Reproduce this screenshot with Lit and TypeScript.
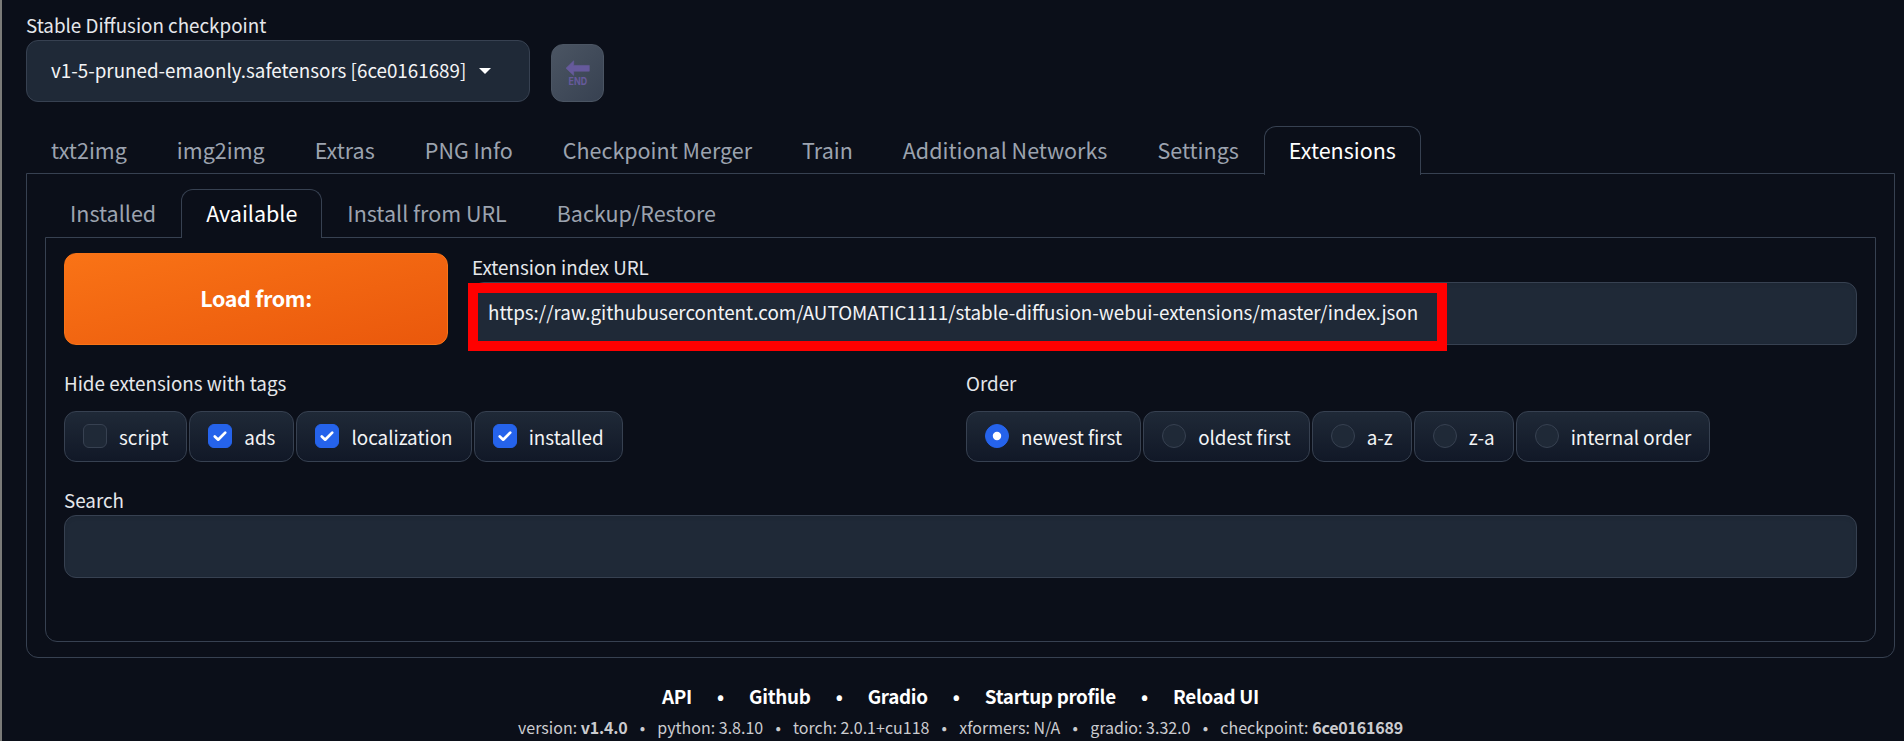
import { LitElement, html, css, svg } from "lit";
import { classMap } from "lit/directives/class-map.js";

const MAIN_TABS = ["txt2img", "img2img", "Extras", "PNG Info", "Checkpoint Merger", "Train", "Additional Networks", "Settings", "Extensions"];
const SUB_TABS = ["Installed", "Available", "Install from URL", "Backup/Restore"];
const TAGS = [
  { label: "script", on: false },
  { label: "ads", on: true },
  { label: "localization", on: true },
  { label: "installed", on: true },
];
const ORDERS = ["newest first", "oldest first", "a-z", "z-a", "internal order"];
const LINKS = ["API", "Github", "Gradio", "Startup profile", "Reload UI"];
const VERSIONS = [
  { name: "version", value: "v1.4.0", strong: true },
  { name: "python", value: "3.8.10" },
  { name: "torch", value: "2.0.1+cu118" },
  { name: "xformers", value: "N/A" },
  { name: "gradio", value: "3.32.0" },
  { name: "checkpoint", value: "6ce0161689", strong: true },
];

class AppRoot extends LitElement {
  static styles = css`
    :host {
      display: block;
      box-sizing: border-box;
      height: 741px;
      overflow: hidden;
      background: #0b0f19;
      border-left: 2px solid #7b7b78;
      padding: 12px 9px 0 24px;
      color: #f3f4f6;
      font-family: "Noto Sans CJK JP", "Source Sans Pro", sans-serif;
      font-size: 18.81px;
      line-height: 28px;
    }
    * { box-sizing: border-box; }
    .top { display: flex; align-items: flex-end; gap: 21px; height: 90px; }
    .label { height: 28px; line-height: 26px; color: #e5e7eb; white-space: nowrap; }
    .select {
      width: 504px; height: 62px; display: flex; align-items: center; gap: 13px;
      padding: 0 24px 2px; background: #1f2937; border: 1px solid #374151; border-radius: 12px;
      white-space: nowrap;
    }
    .refresh {
      width: 53px; height: 58px; border-radius: 12px; border: 1px solid #4b5563;
      background: linear-gradient(to bottom right, #4b5563, #374151);
      display: flex; align-items: center; justify-content: center;
    }
    .end { font: 700 11px Inter, sans-serif; fill: #665a9c; }
    .tabs { display: flex; height: 48px; margin-bottom: -1px; font-size: 21.5px; white-space: nowrap; }
    .main { margin-top: 24px; }
    .tab {
      padding: 0 24px; line-height: 45px; color: #9ca3af;
      border: 1px solid transparent; border-bottom: 0; border-radius: 12px 12px 0 0;
    }
    .tab.active { color: #fff; background: #0b0f19; border-color: #374151; height: 49px; z-index: 1; }
    .panel { border: 1px solid #374151; border-radius: 0 0 12px 12px; }
    .outer { height: 485px; padding: 15px 18px; }
    .sub { height: 49px; }
    .inner { height: 405px; padding: 15px 18px; }
    .load-row { display: grid; grid-template-columns: 384px 1fr; gap: 24px; height: 92px; }
    .load {
      display: flex; align-items: center; justify-content: center;
      border: 1px solid #f97316; border-radius: 12px; color: #fff;
      background: linear-gradient(to bottom right, #f97316, #ea580c);
      font-size: 21.46px; font-weight: 700; letter-spacing: -0.3px; padding-bottom: 2px;
    }
    .url { display: flex; flex-direction: column; }
    .url .label { height: 29px; line-height: 28px; }
    .input {
      height: 63px; padding: 15px 15px; line-height: 28px; background: #1f2937;
      border: 1px solid #374151; border-radius: 12px; box-shadow: inset 0 2px 4px rgba(0, 0, 0, 0.06);
      white-space: nowrap; position: relative;
    }
    .mark { position: absolute; left: -5px; top: 0; width: 979px; height: 68px; border: 10px solid #f00; }
    .filters { display: grid; grid-template-columns: 902px 1fr; margin-top: 24px; height: 117px; }
    .filters .label { height: 42px; line-height: 27px; }
    .chips { display: flex; gap: 2.1px; }
    .chip {
      display: flex; align-items: center; gap: 12px; height: 51px; padding: 0 18px;
      border: 1px solid #374151; border-radius: 12px; white-space: nowrap;
      background: linear-gradient(to bottom, #1f2937, #111827);
    }
    .chip span { line-height: 27px; padding-bottom: 1px; }
    .box {
      width: 24px; height: 24px; border: 1px solid #374151; border-radius: 6px; background: #1f2937;
      display: flex; align-items: center; justify-content: center; margin-bottom: 1px;
    }
    .box.round { border-radius: 50%; }
    .box.on { background: #2563eb; border-color: #2563eb; }
    .search .label { height: 29px; line-height: 28px; }
    .links { display: flex; justify-content: center; gap: 25.2px; margin-top: 24px; line-height: 28px; font-weight: 700; letter-spacing: -0.3px; color: #fff; }
    .versions { display: flex; justify-content: center; gap: 12.2px; margin-top: 5px; font-size: 16px; line-height: 25px; color: #cbccd0; white-space: nowrap; }
    .versions b { letter-spacing: -0.2px; }
  `;

  private tabs(names: string[], active: string, cls: string) {
    return html`<div class="tabs ${cls}">
      ${names.map((n) => html`<div class=${classMap({ tab: true, active: n === active })}>${n}</div>`)}
    </div>`;
  }

  private mark(round: boolean) {
    return round
      ? svg`<circle cx="12" cy="12" r="4.6" fill="#fff"/>`
      : svg`<path d="M6.3 12.6 L10 16 L17.7 8.3" fill="none" stroke="#fff" stroke-width="3" stroke-linecap="round" stroke-linejoin="round"/>`;
  }

  private chip(label: string, on: boolean, round: boolean) {
    return html`<div class="chip">
      <div class=${classMap({ box: true, on, round })}>
        ${on ? html`<svg width="24" height="24" viewBox="0 0 24 24">${this.mark(round)}</svg>` : ""}
      </div>
      <span>${label}</span>
    </div>`;
  }

  render() {
    return html`
      <div class="top">
        <div>
          <div class="label">Stable Diffusion checkpoint</div>
          <div class="select">
            <span>v1-5-pruned-emaonly.safetensors [6ce0161689]</span>
            <svg width="12" height="8" viewBox="0 0 12 8"><path d="M0 2H12L6 8Z" fill="#fff" /></svg>
          </div>
        </div>
        <div class="refresh">
          <svg width="26" height="36" viewBox="0 -5 26 36">
            <path d="M1 8.2L8.7 0.8V5.4H24.3V11.2H8.7V15.4Z" fill="#665a9c" stroke="#665a9c" stroke-width=".6" stroke-linejoin="round" />
            <text class="end" x="3.6" y="24.6" textLength="18.5" lengthAdjust="spacingAndGlyphs">END</text>
          </svg>
        </div>
      </div>
      ${this.tabs(MAIN_TABS, "Extensions", "main")}
      <div class="panel outer">
        ${this.tabs(SUB_TABS, "Available", "sub")}
        <div class="panel inner">
          <div class="load-row">
            <div class="load">Load from:</div>
            <div class="url">
              <div class="label">Extension index URL</div>
              <div class="input">
                https://raw.githubusercontent.com/AUTOMATIC1111/stable-diffusion-webui-extensions/master/index.json
                <div class="mark"></div>
              </div>
            </div>
          </div>
          <div class="filters">
            <div>
              <div class="label">Hide extensions with tags</div>
              <div class="chips">${TAGS.map((t) => this.chip(t.label, t.on, false))}</div>
            </div>
            <div>
              <div class="label">Order</div>
              <div class="chips">${ORDERS.map((o, i) => this.chip(o, i === 0, true))}</div>
            </div>
          </div>
          <div class="search">
            <div class="label">Search</div>
            <div class="input"></div>
          </div>
        </div>
      </div>
      <div class="links">${LINKS.map((l, i) => html`${i ? html`<span>•</span>` : ""}<span>${l}</span>`)}</div>
      <div class="versions">
        ${VERSIONS.map((v, i) => html`${i ? html`<span>•</span>` : ""}<span>${v.name}: ${v.strong ? html`<b>${v.value}</b>` : v.value}</span>`)}
      </div>
    `;
  }
}
customElements.define("app-root", AppRoot);
